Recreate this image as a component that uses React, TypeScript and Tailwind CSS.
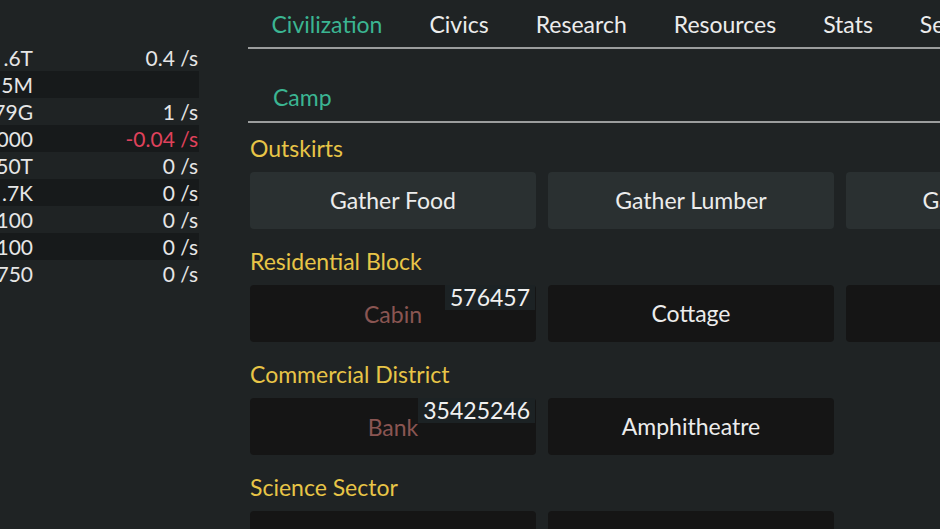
import React from "react";

const rows: { amt: string; rate: string; red?: boolean }[] = [
  { amt: ".6T", rate: "0.4 /s" },
  { amt: "5M", rate: "" },
  { amt: "79G", rate: "1 /s" },
  { amt: "000", rate: "-0.04 /s", red: true },
  { amt: "50T", rate: "0 /s" },
  { amt: ".7K", rate: "0 /s" },
  { amt: "100", rate: "0 /s" },
  { amt: "100", rate: "0 /s" },
  { amt: "750", rate: "0 /s" },
];

const tabs = ["Civilization", "Civics", "Research", "Resources", "Stats", "Settings"];

type Btn = { label: string; badge?: string; disabled?: boolean };
type Section = { title: string; light?: boolean; buttons: Btn[] };

const sections: Section[] = [
  {
    title: "Outskirts",
    light: true,
    buttons: [{ label: "Gather Food" }, { label: "Gather Lumber" }, { label: "Gather Stone" }],
  },
  {
    title: "Residential Block",
    buttons: [{ label: "Cabin", badge: "576457", disabled: true }, { label: "Cottage" }, { label: "House" }],
  },
  {
    title: "Commercial District",
    buttons: [{ label: "Bank", badge: "35425246", disabled: true }, { label: "Amphitheatre" }],
  },
  {
    title: "Science Sector",
    buttons: [{ label: "University" }, { label: "Library" }],
  },
];

export default function App() {
  return (
    <div
      className="w-[940px] h-[529px] overflow-hidden bg-[#1f2324] flex items-start text-[#e6e6e6]"
      style={{ fontFamily: "Lato, 'Noto Sans', sans-serif" }}
    >
      <div className="w-[199px] shrink-0 pt-[44px] flex flex-col text-[21px]">
        {rows.map((r, i) => (
          <div
            key={i}
            className={`h-[27px] shrink-0 flex items-center justify-between pr-[1px] leading-none ${
              i % 2 === 1 ? "bg-[#171a1b]" : ""
            }`}
          >
            <span className="w-[33px] flex justify-end whitespace-nowrap">{r.amt}</span>
            <span className={r.red ? "text-[#e0425c]" : ""}>{r.rate}</span>
          </div>
        ))}
      </div>
      <div className="ml-[49px] flex-1 min-w-0 flex flex-col">
        <div className="flex h-[47px] shrink-0 items-center pt-[2px] text-[23px] leading-none whitespace-nowrap">
          {tabs.map((t, i) => (
            <div key={t} className={`px-[23.5px] ${i === 0 ? "text-[#3bb592]" : "text-[#ececec]"}`}>
              {t}
            </div>
          ))}
        </div>
        <div className="h-[2px] shrink-0 bg-[#9b9d9d]" />
        <div className="h-[72px] shrink-0 flex items-end pb-[12px] px-[25px] text-[23px] leading-none text-[#3bb592]">
          Camp
        </div>
        <div className="h-[2px] shrink-0 bg-[#9b9d9d]" />
        <div className="flex flex-col pl-[2px]">
          {sections.map((s, si) => (
            <div key={s.title} className={`shrink-0 ${si === 0 ? "mt-[13px]" : "mt-[20px]"}`}>
              <div className="h-[24px] flex items-center text-[23px] leading-none text-[#e8c547] whitespace-nowrap">
                {s.title}
              </div>
              <div className="mt-[12px] grid grid-cols-[286px_286px_286px] gap-[12px]">
                {s.buttons.map((b) => (
                  <div
                    key={b.label}
                    className={`relative h-[57px] rounded-[4px] flex items-center justify-center text-[23px] leading-none whitespace-nowrap ${
                      s.light ? "bg-[#2a3031]" : "bg-[#151515]"
                    } ${b.disabled ? "text-[#8a5552]" : "text-[#ececec]"}`}
                  >
                    <span className={b.badge ? "pt-[2px]" : ""}>{b.label}</span>
                    {b.badge && (
                      <span className="absolute top-0 right-[1px] h-[25px] px-[5px] flex items-center bg-[#1c2224] text-[#f0f0f0] text-[23px] leading-none">
                        {b.badge}
                      </span>
                    )}
                  </div>
                ))}
              </div>
            </div>
          ))}
        </div>
      </div>
    </div>
  );
}
